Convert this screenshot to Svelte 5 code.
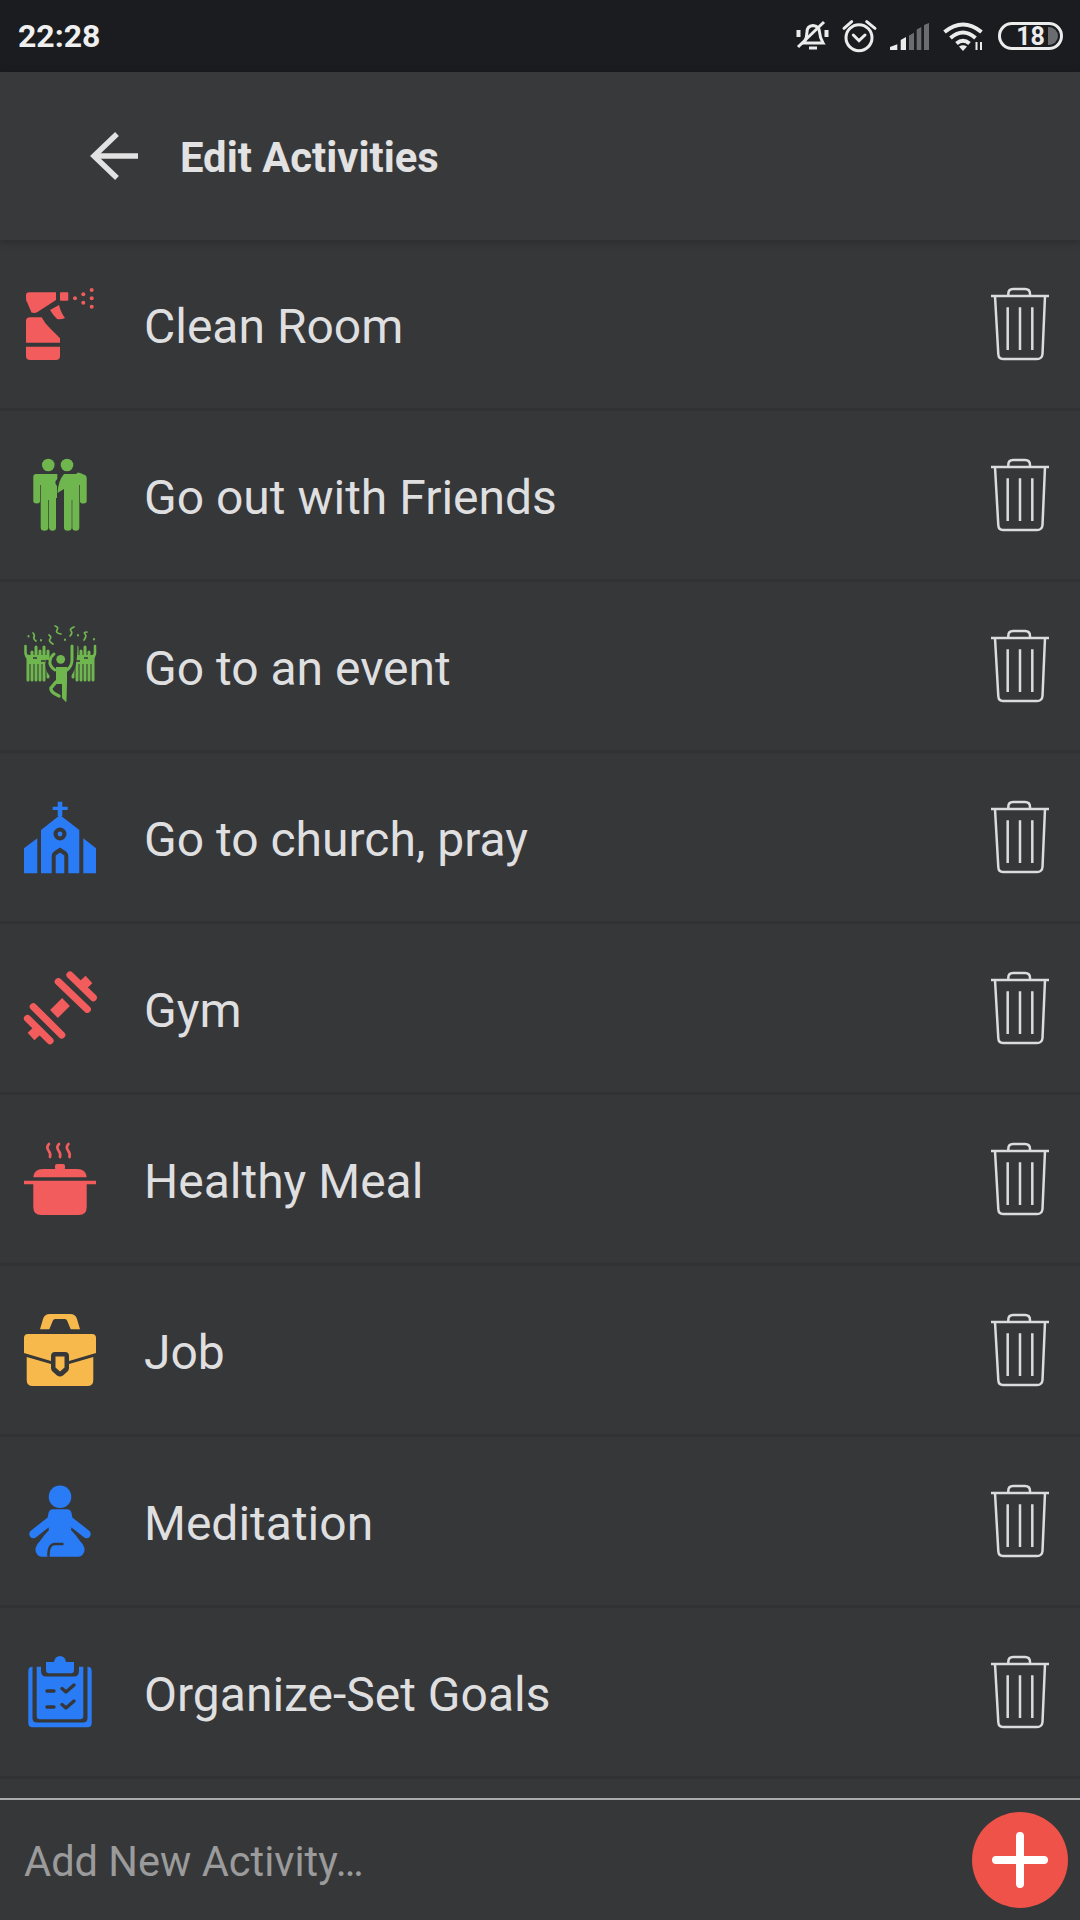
<script>
  const activities = [
    { name: 'Clean Room', color: '#f25c5c', icon: spray },
    { name: 'Go out with Friends', color: '#6fb64f', icon: friends },
    { name: 'Go to an event', color: '#6fb64f', icon: party },
    { name: 'Go to church, pray', color: '#2a7bf6', icon: church },
    { name: 'Gym', color: '#f25c5c', icon: dumbbell },
    { name: 'Healthy Meal', color: '#f25c5c', icon: pot },
    { name: 'Job', color: '#f8b94c', icon: briefcase },
    { name: 'Meditation', color: '#2a7bf6', icon: meditate },
    { name: 'Organize-Set Goals', color: '#2a7bf6', icon: clipboard }
  ];
</script>

{#snippet spray()}
  <path d="M5 4.300H32V12L13.500 24Q11 25.500 7.500 24.500L3 14Q2 13 2 10V7.300Q2 4.300 5 4.300Z" />
  <rect x="36" y="4.300" width="8.300" height="8.400" rx="1" />
  <path d="M26 22L35 17Q37 25 41 30Q37 32 33 31Q29 27 26 22Z" />
  <path d="M2 33Q2 29.300 6 29.300H17.700Q21 36 26 40.300Q31 45 36 50.300V54.700H2Z" />
  <path d="M2 58.700H36V68Q36 72 32 72H6Q2 72 2 68Z" />
  <circle cx="51" cy="10.300" r="2" />
  <circle cx="59.300" cy="6.300" r="2" />
  <circle cx="59.300" cy="14.700" r="2" />
  <circle cx="67.700" cy="2" r="2" />
  <circle cx="67.700" cy="10.300" r="2" />
  <circle cx="67.700" cy="18.700" r="2" />
{/snippet}

{#snippet friends()}
  <circle cx="24.300" cy="6" r="6.300" />
  <circle cx="43" cy="6" r="6.300" />
  <path d="M12 15H33.300V20Q29.500 23 33 27V39H32V68.500Q32 71.700 28.600 71.700T25 68.500V41H24.300V68.500Q24.300 71.700 20.500 71.700T16.700 68.500V26H16V42Q16 44.500 12.700 44.500T9.300 42V18Q9.300 15 12 15Z" />
  <path d="M40 15H52L54 13.500Q57 14 59.500 15.500Q62.700 16 62.700 19V42Q62.700 44.500 59.300 44.500T56 42V26H55.300V68.500Q55.300 71.700 51.800 71.700T48.300 68.500V41H47.700V68.500Q47.700 71.700 43.800 71.700T40 68.500V30L33.500 34Q34 22 40 15Z" />
{/snippet}

{#snippet party()}
  <g fill="none" stroke="currentColor" stroke-width="2.600" stroke-linecap="round">
    <path d="M1.500 16V23Q2 27 5 29" />
    <path d="M71 16V23Q70.500 27 67.500 29" />
  </g>
  <g fill="none" stroke="currentColor" stroke-width="1.700" stroke-linecap="round">
    <path d="M31 -4Q35 -3 33 0T37 4" />
    <path d="M9 3Q11 5 10 7T12 11" />
    <path d="M25 5Q28 7 26 9T29 14" />
    <path d="M46 6Q49 3 47 1T50 -3" />
    <path d="M60 10Q63 6 61 4T63 2" />
    <path d="M4.500 6V6.500M17 10V10.500M41 9.500V10M54 5V5.500M70 9V9.500" stroke-width="2" />
  </g>
  <g fill="none" stroke="currentColor" stroke-width="3" stroke-linecap="round">
    <path d="M4 26V50M8 22V50M12 17V50M16 21V50M20 17V50M24 21V47" />
    <path d="M69 26V50M65 22V50M61 17V50M57 21V50M53 17V50M49 21V47" />
  </g>
  <rect x="3" y="25" width="22" height="9" />
  <rect x="48" y="25" width="22" height="9" />
  <path d="M9 28H13M17 31H21M52 31H56M60 28H64" stroke="var(--bg)" stroke-width="1.500" />
  <circle cx="36.700" cy="29.300" r="4.400" />
  <path d="M25 30Q24 42 31 45H43Q50 40 50 14" fill="none" stroke="var(--bg)" stroke-width="7" />
  <g fill="none" stroke="currentColor" stroke-width="3" stroke-linecap="round" stroke-linejoin="round">
    <path d="M31 40Q25 36 26 31T30 24" />
    <path d="M43 40Q48 36 48 30V16" />
    <path d="M32 52L27 58Q26 62 35 66" stroke-width="3.500" />
  </g>
  <path d="M32 37H43V52L42.500 71Q42 73 41 71L38 68V54H32Z" />
{/snippet}

{#snippet church()}
  <path d="M33.700 .7H38.300V5.700H43.700V9H38.300V15H33.700V9H28.700V5.700H33.700Z" />
  <path fill-rule="evenodd" d="M36 14L55.300 29V72.300H44.300V55Q44.300 52 42 50.500L36 46.500L30 50.500Q27.700 52 27.700 55V72.300H17V29ZM36 26.500A6.500 6.500 0 1 0 36 39.500A6.500 6.500 0 1 0 36 26.500Z" />
  <circle cx="36" cy="33" r="2.400" />
  <path d="M36 51.500L40.300 54.500V72.300H31.700V54.500Z" />
  <path d="M0 47.300L13.300 37.300V72.300H0Z" />
  <path d="M59.300 37.300L72 47.300V72.300H59.300Z" />
{/snippet}

{#snippet dumbbell()}
  <g fill="none" stroke="currentColor" stroke-linecap="round">
    <path d="M9.300 34.700L37.700 63" stroke-width="7.200" />
    <path d="M3.500 46.500L26 68.700" stroke-width="7.200" />
    <path d="M34.300 9.700L63.300 37.300" stroke-width="7.200" />
    <path d="M46 3L69.300 25.700" stroke-width="7.200" />
    <path d="M30 42L42 30" stroke-width="11" stroke-linecap="butt" />
    <path d="M58 14L65 7.500" stroke-width="10" stroke-linecap="butt" />
    <path d="M14 58L7 64.500" stroke-width="10" stroke-linecap="butt" />
  </g>
{/snippet}

{#snippet pot()}
  <g fill="none" stroke="currentColor" stroke-width="2.700" stroke-linecap="round">
    <path d="M25 1Q22 4 24.500 7.500T26 14" />
    <path d="M35 1Q32 4 34.500 7.500T36 14" />
    <path d="M44.500 1Q41.500 4 44 7.500T45.500 14" />
  </g>
  <rect x="31" y="21" width="10" height="6" rx="2" />
  <path d="M9.300 34.300Q10 26 19 26H53Q62 26 62.700 34.300Z" />
  <path d="M0 37.700H72V41.300H62.700V64Q62.700 72 54.700 72H17.300Q9.300 72 9.300 64V41.300H0Z" />
{/snippet}

{#snippet briefcase()}
  <path d="M16 15.300L19 5Q20.500 0 26 0H46Q51.500 0 53 5L56 15.300H46.700L43.500 7.500Q43 5 41 5H31Q29 5 28.500 7.500L25.300 15.300Z" />
  <path d="M4 20H68Q72 20 72 24V39L45 47V42Q45 38 41 38H31Q27 38 27 42V47L0 39V24Q0 20 4 20Z" />
  <path d="M2.700 43L27 50V54Q27 56 28.500 57.500L33 61.500Q36 63.500 39 61.500L43.500 57.500Q45 56 45 54V50L69.300 43V66Q69.300 72 63.300 72H8.700Q2.700 72 2.700 66Z" />
  <path d="M31.500 42.500H40.500V53.500L36 57.500L31.500 53.500Z" />
{/snippet}

{#snippet meditate()}
  <circle cx="36" cy="11.700" r="11.300" />
  <path d="M29 24.300H43Q46.500 24.300 47.500 28L49 36L47 45Q52 50 56 56Q62 62 60 67.500Q58 71.700 54 71.700H18Q14 71.700 12 67.500Q10 62 16 56Q20 50 25 45L23 36L24.500 28Q25.500 24.300 29 24.300Z" />
  <g fill="none" stroke="currentColor" stroke-width="8.500" stroke-linecap="round">
    <path d="M26 36L9.500 49" />
    <path d="M46 36L62.500 49" />
  </g>
  <path d="M39.500 59H31Q24 59 24.500 71.700" fill="none" stroke="var(--bg)" stroke-width="2.500" />
{/snippet}

{#snippet clipboard()}
  <path d="M8.500 10.700V62Q8.500 66.500 13 66.500H59Q63.500 66.500 63.500 62V10.700Q67.700 10.700 67.700 15V67Q67.700 71.300 63.500 71.300H8.500Q4.300 71.300 4.300 67V15Q4.300 10.700 8.500 10.700Z" />
  <path d="M12.700 10.700H17V15Q17 20.500 22 20.500H50Q55 20.500 55 15V10.700H59.300V60Q59.300 63.300 56 63.300H16Q12.700 63.300 12.700 60Z" />
  <path d="M22 6H30Q31 0 36 0T42 6H50V14Q50 17.300 47 17.300H25Q22 17.300 22 14Z" />
  <g fill="none" stroke="var(--bg)" stroke-width="3.400" stroke-linecap="round" stroke-linejoin="round">
    <path d="M23 35H30" />
    <path d="M38 32.500L42 36L50 29" />
    <path d="M23 51H30" />
    <path d="M38 48.500L42 52L50 45" />
  </g>
{/snippet}

<div class="screen">
  <div class="status">
    <span class="status__time">22:28</span>
    <div class="status__icons">
      <svg class="ico" width="33" height="30" viewBox="0 0 33 30" fill="none" stroke="#ececec" stroke-width="3">
        <path d="M8 22Q11 17 11 11Q11 5 17 4.500Q23 5 23.500 11Q24 17 27 22H6" />
        <path d="M13 27H21" />
        <path d="M2 26L28 1" />
        <path d="M2.500 9V16M30.500 9V16" stroke-width="4" />
      </svg>
      <svg class="ico" width="33" height="32" viewBox="0 0 33 32" fill="none" stroke="#ececec" stroke-width="3" stroke-linecap="round">
        <circle cx="16" cy="17.700" r="13" />
        <path d="M10.300 15L16 20.700L22 15" />
        <path d="M1 8.300L8.700 1.700M32 8.300L23.700 1.700" />
      </svg>
      <svg class="ico" width="39" height="27" viewBox="0 0 39 27">
        <path d="M0 27V24L7.300 21.300V27Z" fill="#ececec" />
        <path d="M10.700 17L16 14V27H10.700Z" fill="#ececec" />
        <path d="M19 12.500L24 9.700V27H19Z" fill="#6b6c6f" />
        <path d="M26.700 6.500L31.300 4V27H26.700Z" fill="#6b6c6f" />
        <path d="M34 2L39 0V27H34Z" fill="#6b6c6f" />
      </svg>
      <svg class="ico" width="41" height="29" viewBox="0 0 41 29">
        <g fill="none" stroke="#ececec" stroke-width="4">
          <path d="M1.500 10Q20 -5 38.500 10" />
          <path d="M7.500 16Q20 5 32.500 16" />
          <path d="M13.500 21.500Q20 16 26.500 21.500" />
        </g>
        <path d="M20 29L16 24.500Q20 22 24 24.500Z" fill="#ececec" />
        <path d="M33.500 20V28M38 20V28" stroke="#ececec" stroke-width="2" />
      </svg>
      <div class="battery">
        <span class="battery__level"></span>
        <span class="battery__num">18</span>
      </div>
    </div>
  </div>

  <header class="bar">
    <svg class="bar__back" width="48" height="48" viewBox="0 0 48 48" fill="none" stroke="#e2e2e3" stroke-width="5.500">
      <path d="M48 24H3" />
      <path d="M27 2L4 24L27 46" />
    </svg>
    <h1 class="bar__title">Edit Activities</h1>
  </header>

  <ul class="list">
    {#each activities as activity}
      <li class="row">
        <svg class="row__icon" viewBox="0 0 72 72" fill="currentColor" style="color: {activity.color}">
          {@render activity.icon()}
        </svg>
        <span class="row__name">{activity.name}</span>
        <svg class="row__trash" width="58" height="72" viewBox="0 0 58 72" fill="none" stroke="#dcdcdd" stroke-width="2.500">
          <path d="M0 8H58" />
          <path d="M17.300 8V6Q17.300 1 22 1H34Q39 1 39 6V8" />
          <path d="M4 8L7.300 66Q7.500 71 12 71H46Q51 71 51.500 66L54 8" />
          <path d="M16.700 19.300V62M29 19.300V62M41.300 19.300V62" />
        </svg>
      </li>
    {/each}
  </ul>

  <div class="add">
    <span class="add__placeholder">Add New Activity…</span>
    <button class="add__btn" aria-label="Add">
      <svg width="56" height="56" viewBox="0 0 56 56" fill="none" stroke="#fff" stroke-width="8" stroke-linecap="round">
        <path d="M28 4V52M4 28H52" />
      </svg>
    </button>
  </div>
</div>

<style>
  :global(body) {
    margin: 0;
    background: #363739;
  }

  .screen {
    --bg: #363739;
    display: flex;
    flex-direction: column;
    width: 1080px;
    height: 1920px;
    overflow: hidden;
    background: var(--bg);
    font-family: Roboto, "Liberation Sans", sans-serif;
  }

  .status {
    display: flex;
    align-items: center;
    justify-content: space-between;
    flex: none;
    height: 72px;
    padding: 0 17px 0 18px;
    box-sizing: border-box;
    background: #1a1c20;
  }

  .status__time {
    color: #efefef;
    font-size: 32px;
    font-weight: 700;
  }

  .status__icons {
    display: flex;
    align-items: center;
    gap: 14px;
  }

  .ico {
    display: block;
    overflow: visible;
  }

  .battery {
    position: relative;
    display: flex;
    align-items: center;
    justify-content: center;
    width: 65px;
    height: 28px;
    box-sizing: border-box;
    border: 3px solid #ececec;
    border-radius: 14px;
  }

  .battery__level {
    position: absolute;
    top: 2px;
    right: 2px;
    width: 10px;
    height: 18px;
    border-radius: 0 9px 9px 0;
    background: #6b6c6f;
  }

  .battery__num {
    position: relative;
    color: #ececec;
    font-size: 25px;
    font-weight: 700;
    line-height: 1;
  }

  .bar {
    position: relative;
    z-index: 1;
    display: flex;
    align-items: center;
    flex: none;
    height: 168px;
    padding-left: 90px;
    box-sizing: border-box;
    background: #38393a;
    box-shadow: 0 2px 8px rgba(0, 0, 0, 0.22);
  }

  .bar__title {
    margin: 2px 0 0 42px;
    color: #e2e2e3;
    font-size: 41.800px;
    font-weight: 700;
  }

  .list {
    flex: 1;
    margin: 0;
    padding: 0;
    list-style: none;
  }

  .row {
    display: flex;
    align-items: center;
    height: 168px;
    padding: 0 31px 0 24px;
    border-bottom: 3px solid #313234;
  }

  .row__icon {
    flex: none;
    width: 72px;
    height: 72px;
    overflow: visible;
  }

  .row__name {
    flex: 1;
    margin-left: 48px;
    padding-top: 5px;
    color: #dfdfe0;
    font-size: 48px;
  }

  .row__trash {
    flex: none;
    overflow: visible;
  }

  .add {
    display: flex;
    align-items: center;
    justify-content: space-between;
    flex: none;
    height: 122px;
    padding: 0 12px 0 24px;
    box-sizing: border-box;
    border-top: 2px solid #aaaaab;
  }

  .add__placeholder {
    padding-top: 2px;
    color: #9b9b9c;
    font-size: 41.600px;
  }

  .add__btn {
    display: flex;
    align-items: center;
    justify-content: center;
    width: 96px;
    height: 96px;
    padding: 0;
    border: none;
    border-radius: 50%;
    background: #ee5248;
  }
</style>
